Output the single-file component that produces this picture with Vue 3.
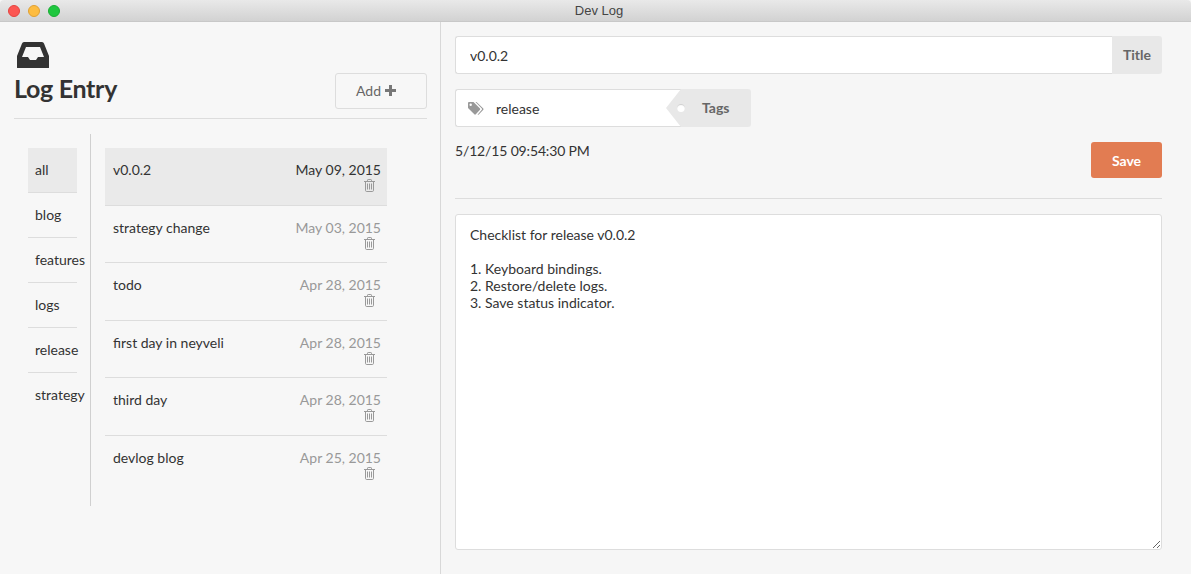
<template>
    <div class="window">
        <header class="titlebar">
            <div class="traffic">
                <span class="light red"></span>
                <span class="light yellow"></span>
                <span class="light green"></span>
            </div>
            <span class="window-title">Dev Log</span>
        </header>

        <div class="panes">
            <section class="left-pane">
                <div class="head">
                    <div class="brand">
                        <svg class="inbox-icon" viewBox="0 0 32 26" width="32" height="26">
                            <path fill="#333" fill-rule="evenodd" d="M7 0H25Q26.500 0 27 1.500L32 14V25.500Q32 26 31.500 26H.5Q0 26 0 25.500V14L5 1.500Q5.500 0 7 0ZM9 5L5 15H11L13 18H19L21 15H27L23 5Z" />
                        </svg>
                        <h1>Log Entry</h1>
                    </div>
                    <button class="add-btn">Add
                        <svg viewBox="0 0 11 11" width="11" height="11">
                            <path fill="#777" d="M4 0H7V4H11V7H7V11H4V7H0V4H4Z" />
                        </svg>
                    </button>
                </div>

                <div class="browser">
                    <ul class="tabs">
                        <li v-for="(tab, i) in tabs" :key="tab" :class="{active: i === 0}">{{ tab }}</li>
                    </ul>
                    <ul class="entries">
                        <li v-for="(entry, i) in entries" :key="entry.title" class="entry" :class="{active: i === 0}">
                            <span class="entry-title">{{ entry.title }}</span>
                            <div class="entry-meta">
                                <span class="entry-date">{{ entry.date }}</span>
                                <svg class="trash" viewBox="0 0 11 13" width="11" height="13">
                                    <path fill="none" stroke="#999" d="M0 2.500H11M3.500 2.500V1.200Q3.500 .5 4.200 .5H6.800Q7.500 .5 7.500 1.200V2.500M1.500 2.500V11.300Q1.500 12.500 2.700 12.500H8.300Q9.500 12.500 9.500 11.300V2.500M3.500 4.500V10.500M5.500 4.500V10.500M7.500 4.500V10.500" />
                                </svg>
                            </div>
                        </li>
                    </ul>
                </div>
            </section>

            <section class="right-pane">
                <div class="input-group">
                    <input class="title-input" type="text" value="v0.0.2" />
                    <span class="addon">Title</span>
                </div>

                <div class="tag-row">
                    <div class="tag-field">
                        <svg viewBox="0 0 16 13" width="16" height="13">
                            <path fill="#999" d="M0 1Q0 0 1 0H5.500L12 6.500Q12.500 7.200 12 7.800L7.800 12.300Q7 13 6.300 12.300L0 6ZM2.700 1.600A1.200 1.200 0 1 0 2.701 4A1.200 1.200 0 1 0 2.700 1.600ZM7.500 0H8.500L15.300 6.500Q15.800 7.200 15.300 7.800L10.800 12.500Q10.200 13 9.500 12.700L14 7.500Q14.200 7 13.800 6.500Z" />
                        </svg>
                        <span>release</span>
                    </div>
                    <div class="tag-label">
                        <span class="tag-hole"></span>
                        Tags
                    </div>
                </div>

                <div class="meta-row">
                    <span class="timestamp">5/12/15 09:54:30 PM</span>
                    <button class="save-btn">Save</button>
                </div>

                <hr class="divider" />

                <textarea class="body-input" :value="body"></textarea>
            </section>
        </div>
    </div>
</template>

<script setup>
const tabs = ['all', 'blog', 'features', 'logs', 'release', 'strategy'];

const entries = [
    { title: 'v0.0.2', date: 'May 09, 2015' },
    { title: 'strategy change', date: 'May 03, 2015' },
    { title: 'todo', date: 'Apr 28, 2015' },
    { title: 'first day in neyveli', date: 'Apr 28, 2015' },
    { title: 'third day', date: 'Apr 28, 2015' },
    { title: 'devlog blog', date: 'Apr 25, 2015' }
];

const body = `Checklist for release v0.0.2

1. Keyboard bindings.
2. Restore/delete logs.
3. Save status indicator.`;
</script>

<style>
html, body {
    margin: 0;
    height: 100%;
    overflow: hidden;
}
</style>

<style scoped>
.window {
    height: 574px;
    display: flex;
    flex-direction: column;
    font-family: 'Lato', sans-serif;
    font-size: 14px;
    color: #333;
    background: #f7f7f7;
}

.titlebar {
    position: relative;
    height: 22px;
    flex: none;
    box-sizing: border-box;
    display: flex;
    align-items: center;
    justify-content: center;
    padding-left: 7px;
    background: linear-gradient(#e9e9e9, #d2d2d2);
    border-bottom: 1px solid #c8c8c8;
    border-radius: 4px 4px 0 0;
}

.traffic {
    position: absolute;
    left: 8px;
    top: 5px;
    display: flex;
    gap: 8px;
}

.light {
    width: 12px;
    height: 12px;
    border-radius: 50%;
    box-sizing: border-box;
}

.red { background: #fc5753; border: 1px solid #e5443f; }
.yellow { background: #fdbc40; border: 1px solid #e0a032; }
.green { background: #1fc73f; border: 1px solid #18ad33; }

.window-title {
    font-family: 'Liberation Sans', sans-serif;
    font-size: 13px;
    color: #444;
}

.panes {
    flex: 1;
    display: flex;
    min-height: 0;
}

.left-pane {
    width: 441px;
    flex: none;
    box-sizing: border-box;
    padding: 0 13px 0 14px;
    border-right: 1px solid #d8d8d8;
}

.head {
    height: 97px;
    box-sizing: border-box;
    display: flex;
    justify-content: space-between;
    align-items: flex-end;
    padding-bottom: 9px;
    border-bottom: 1px solid #ddd;
}

.brand {
    display: flex;
    flex-direction: column;
    align-items: flex-start;
    margin-bottom: 4px;
}

.inbox-icon {
    margin-left: 3px;
}

h1 {
    margin: 3px 0 0;
    font-size: 25px;
    line-height: 34px;
    font-weight: 700;
    letter-spacing: -0.3px;
    color: #333;
}

.add-btn {
    width: 92px;
    height: 36px;
    box-sizing: border-box;
    display: flex;
    align-items: center;
    justify-content: center;
    gap: 4px;
    padding: 0 10px 2px 0;
    background: transparent;
    border: 1px solid #ddd;
    border-radius: 3px;
    font-family: inherit;
    font-size: 14px;
    color: #666;
}

.browser {
    display: flex;
    margin: 15px 0 0 14px;
    height: 372px;
}

ul {
    list-style: none;
    margin: 0;
    padding: 0;
}

.tabs {
    width: 63px;
    box-sizing: border-box;
    padding-top: 14px;
    border-right: 1px solid #d0d0d0;
}

.tabs li {
    width: 49px;
    height: 45px;
    box-sizing: border-box;
    padding: 13px 0 0 7px;
    line-height: 18px;
    border-bottom: 1px solid #ddd;
    white-space: nowrap;
}

.tabs li:last-child {
    border-bottom: none;
}

.tabs li.active {
    background: #eaeaea;
}

.entries {
    width: 282px;
    margin: 14px 0 0 14px;
}

.entry {
    height: 57.5px;
    box-sizing: border-box;
    display: flex;
    justify-content: space-between;
    padding: 13px 6px 0 8px;
    line-height: 18px;
    border-bottom: 1px solid #ddd;
}

.entry:last-child {
    border-bottom: none;
}

.entry.active {
    background: #eaeaea;
}

.entry-meta {
    display: flex;
    flex-direction: column;
    align-items: flex-end;
}

.entry-date {
    color: #999;
}

.entry.active .entry-date {
    color: #333;
}

.trash {
    margin: 0 6px 0 0;
}

.right-pane {
    flex: 1;
    min-width: 0;
    padding: 14px 29px 24px 14px;
    display: flex;
    flex-direction: column;
    background: #f6f6f6;
}

.input-group {
    display: flex;
    height: 38px;
}

.title-input {
    flex: 1;
    min-width: 0;
    box-sizing: border-box;
    padding: 0 14px;
    border: 1px solid #ddd;
    border-right: none;
    border-radius: 3px 0 0 3px;
    background: #fff;
    font-family: inherit;
    font-size: 14px;
    color: #333;
    outline: none;
}

.addon {
    width: 50px;
    display: flex;
    align-items: center;
    justify-content: center;
    padding-bottom: 2px;
    box-sizing: border-box;
    background: #e8e8e8;
    border-radius: 0 3px 3px 0;
    font-weight: 700;
    color: #666;
}

.tag-row {
    display: flex;
    height: 38px;
    margin-top: 15px;
}

.tag-field {
    width: 226px;
    box-sizing: border-box;
    display: flex;
    align-items: center;
    gap: 12px;
    padding-left: 12px;
    background: #fff;
    border: 1px solid #ddd;
    border-right: none;
    border-radius: 3px 0 0 3px;
}

.tag-label {
    position: relative;
    width: 70px;
    box-sizing: border-box;
    display: flex;
    align-items: center;
    padding: 0 0 2px 21px;
    background: #e8e8e8;
    border-radius: 0 3px 3px 0;
    font-weight: 700;
    color: #666;
}

.tag-label::before {
    content: '';
    position: absolute;
    left: -15px;
    top: 0;
    border-style: solid;
    border-width: 19px 15px 19px 0;
    border-color: transparent #e8e8e8 transparent transparent;
}

.tag-hole {
    position: absolute;
    left: -4px;
    top: 15px;
    width: 8px;
    height: 8px;
    border-radius: 50%;
    background: #fff;
    box-shadow: inset 0 1px 1px #ccc;
}

.meta-row {
    display: flex;
    justify-content: space-between;
    margin-top: 15px;
}

.timestamp {
    line-height: 18px;
    letter-spacing: -0.15px;
}

.save-btn {
    width: 71px;
    height: 36px;
    border: none;
    border-radius: 3px;
    background: #e27c52;
    color: #fff;
    font-family: inherit;
    font-size: 14px;
    font-weight: 700;
}

.divider {
    width: 100%;
    height: 1px;
    margin: 20px 0 15px;
    border: none;
    background: #ddd;
}

.body-input {
    flex: 1;
    box-sizing: border-box;
    padding: 11px 14px;
    border: 1px solid #ddd;
    border-radius: 3px;
    background: #fff;
    font-family: inherit;
    font-size: 14px;
    line-height: 17px;
    color: #333;
    outline: none;
    resize: vertical;
}
</style>
